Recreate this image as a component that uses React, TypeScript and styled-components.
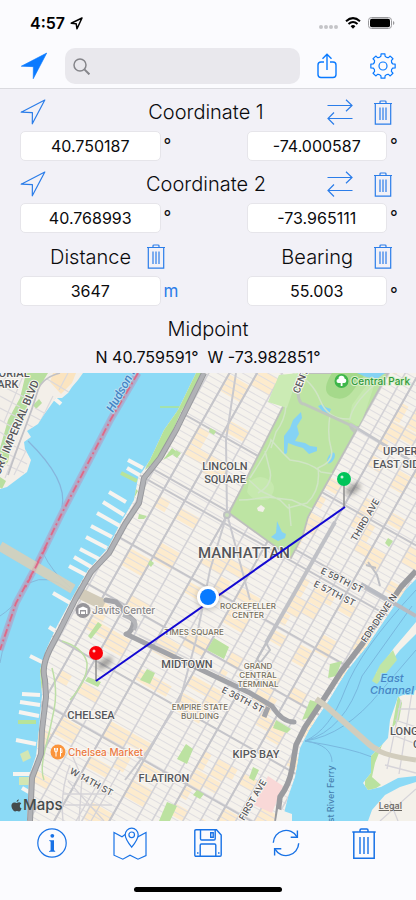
import React from "react";
import styled, { createGlobalStyle } from "styled-components";

const BLUE = "#0a7aff";
const ICON_BLUE = "#2b7de9";
const TOOL_BLUE = "#1872e6";

const GlobalStyle = createGlobalStyle`
  * { box-sizing: border-box; }
  body { margin: 0; background: #fbfbfe; font-family: Inter, "Liberation Sans", sans-serif; color: #0b0b0d; }
  button, input { font: inherit; color: inherit; }
`;

const Page = styled.div`
  display: flex;
  flex-direction: column;
  min-height: 100vh;
  background: #fbfbfe;
`;

const StatusBar = styled.header`
  display: flex;
  align-items: center;
  height: 44px;
  padding: 2px 21px 0 30px;
  gap: 5px;
  font-size: 16px;
  font-weight: 600;
  color: #000;
`;

const StatusIcons = styled.div`
  display: flex;
  align-items: center;
  gap: 7px;
  margin-left: auto;
`;

const NavBar = styled.nav`
  display: flex;
  align-items: center;
  height: 45px;
  padding: 0 20px;
  border-bottom: 1px solid #dadadf;
`;

const IconButton = styled.button<{ $tint?: string; $align?: string }>`
  display: flex;
  align-items: center;
  justify-content: ${(p) => p.$align ?? "center"};
  flex: none;
  padding: 0;
  border: 0;
  background: none;
  color: ${(p) => p.$tint ?? ICON_BLUE};
  cursor: pointer;
`;

const NavActions = styled.div`
  display: flex;
  align-items: center;
  gap: 33px;
  margin-left: 17px;
`;

const SearchField = styled.label`
  display: flex;
  flex: 1;
  align-items: center;
  gap: 8px;
  min-width: 0;
  height: 36px;
  margin-left: 17px;
  padding: 0 8px;
  border-radius: 10px;
  background: #e9e8ed;
`;

const SearchInput = styled.input`
  flex: 1;
  min-width: 0;
  border: 0;
  outline: 0;
  background: none;
  font-size: 17px;
`;

const Panel = styled.main`
  background: #f2f1f7;
`;

const CoordinateHeader = styled.div`
  display: grid;
  grid-template-columns: 1fr auto 1fr;
  align-items: center;
  height: 42px;
  padding: 4px 24px 0 20px;
`;

const HeaderActions = styled.div`
  display: flex;
  align-items: center;
  justify-content: flex-end;
  gap: 21px;
`;

const Title = styled.h2`
  margin: 0;
  font-size: 20px;
  line-height: 28px;
  font-weight: 300;
  text-align: center;
`;

const MeasureHeader = styled.div`
  display: grid;
  grid-template-columns: 1fr 1fr;
  align-items: center;
  height: 43px;
  padding-top: 4px;
`;

const MeasureCell = styled.div<{ $end: number; $gap: number }>`
  display: flex;
  align-items: center;
  justify-content: flex-end;
  gap: ${(p) => p.$gap}px;
  padding-right: ${(p) => p.$end}px;
`;

const MeasureLabel = styled.label`
  font-size: 20px;
  line-height: 28px;
  font-weight: 300;
`;

const FieldRow = styled.div`
  display: grid;
  grid-template-columns: minmax(0, 1fr) 86px minmax(0, 1fr) 14px;
  height: 30px;
  padding: 0 15px 0 20px;
`;

const ValueInput = styled.input`
  width: 100%;
  height: 30px;
  padding: 0 8px;
  border: 1px solid #e6e5ea;
  border-radius: 5px;
  background: #fff;
  font-size: 16px;
  text-align: center;
`;

const Degree = styled.span<{ $low?: boolean }>`
  padding: ${(p) => (p.$low ? 6 : 2)}px 0 0 3px;
  font-size: 17px;
  line-height: 24px;
`;

const UnitButton = styled.button`
  justify-self: start;
  padding: 0 0 0 3px;
  border: 0;
  background: none;
  color: ${ICON_BLUE};
  font-size: 17px;
  line-height: 28px;
`;

const Midpoint = styled.section`
  display: flex;
  flex-direction: column;
  align-items: center;
  height: 67px;
  padding-top: 9px;
`;

const MidpointValue = styled.p`
  margin: 0;
  font-size: 16px;
  line-height: 28px;
  white-space: pre;
`;

const MapArea = styled.section`
  position: relative;
  display: flex;
  flex: 1;
  overflow: hidden;
  background: #8cdaf6;
`;

const MapDrawing = styled.svg`
  display: block;
  width: 100%;
  font-family: Roboto, "Liberation Sans", sans-serif;
`;

const MapBrand = styled.div`
  position: absolute;
  left: 11px;
  bottom: 6px;
  display: flex;
  align-items: center;
  gap: 1px;
  color: #454b4c;
  font-size: 15px;
  line-height: 20px;
  font-weight: 500;
`;

const LegalLink = styled.a`
  position: absolute;
  right: 14px;
  bottom: 8px;
  color: #68655f;
  font-size: 9px;
  line-height: 14px;
  font-weight: 500;
`;

const Toolbar = styled.footer`
  display: flex;
  flex-direction: column;
  align-items: center;
  justify-content: space-between;
  height: 79px;
  padding-bottom: 8px;
`;

const ToolRow = styled.div`
  display: grid;
  grid-template-columns: repeat(5, 1fr);
  width: 100%;
  height: 44px;
  padding: 0 13px;
`;

const HomeIndicator = styled.div`
  width: 148px;
  height: 5px;
  border-radius: 3px;
  background: #000;
`;

const thin = { fill: "none", stroke: "currentColor", strokeWidth: 1.2 };

const LocateIcon = ({ filled }: { filled?: boolean }) => {
  const size = filled ? 28 : 26;
  return (
    <svg width={size} height={size} viewBox="0 0 26 26">
      <path
        d="M24.8 1 1.2 13.2 12.4 13.6 12.3 24.8Z"
        fill={filled ? "currentColor" : "none"}
        stroke="currentColor"
        strokeWidth={filled ? 0.6 : 1.2}
        strokeLinejoin="round"
      />
    </svg>
  );
};

const SwapIcon = () => (
  <svg width="26" height="26" viewBox="0 0 26 26" {...thin}>
    <path d="M.5 6.5H25M19 .8l6 5.7-6 5.7M25.5 19.5H1M7 13.5l-6 6 6 6" />
  </svg>
);

const TrashIcon = ({ large }: { large?: boolean }) => (
  <svg width={large ? 24 : 18} height={large ? 31 : 25} viewBox={large ? "0 0 24 31" : "0 0 18 25"} {...thin}>
    {large ? (
      <>
        <path d="M.3 4H23.7M8 4V2.2Q8 1 9.2 1h5.600Q16 1 16 2.200V4M1.800 4V30.200H22.200V4" strokeWidth="1.500" />
        <path d="M8 9V26M12 9V26M16 9V26" strokeWidth="1.400" />
      </>
    ) : (
      <>
        <path d="M0 3.500H18M6 3.500V1.800Q6 1 7 1h4q1 0 1 .8V3.500M1.300 3.500V24.200H16.700V3.500" />
        <path d="M6 7.500V20M9 7.500V20M12 7.500V20" />
      </>
    )}
  </svg>
);

const ShareIcon = () => (
  <svg width="20" height="26" viewBox="0 0 20 26" {...thin} strokeWidth={1.4}>
    <path d="M7 9H4Q1 9 1 12v9.5q0 3 3 3h12q3 0 3-3V12q0-3-3-3h-3M10 17V1.5M5.5 5.800 10 1.300l4.500 4.500" />
  </svg>
);

const gearPath = (() => {
  const at = (r: number, degrees: number) => {
    const a = (degrees * Math.PI) / 180;
    return `${(13 + r * Math.cos(a)).toFixed(2)} ${(13 + r * Math.sin(a)).toFixed(2)}`;
  };
  let d = "";
  for (let i = 0; i < 8; i++) {
    const c = i * 45 - 90;
    d += `${i ? "L" : "M"}${at(10, c - 12)} L${at(12.3, c - 9)} L${at(12.3, c + 9)} L${at(10, c + 12)} Q${at(8.8, c + 22.5)} ${at(10, c + 33)}`;
  }
  return `${d}Z`;
})();

const GearIcon = () => (
  <svg width="26" height="26" viewBox="0 0 26 26" {...thin} strokeLinejoin="round">
    <path d={gearPath} />
    <circle cx="13" cy="13" r="4" />
  </svg>
);

const SearchIcon = () => (
  <svg width="17" height="17" viewBox="0 0 17 17" fill="none" stroke="#85858a" strokeWidth="1.500">
    <circle cx="7" cy="7" r="6" />
    <path d="m11.400 11.400 5 5" strokeWidth="2" />
  </svg>
);

const InfoIcon = () => (
  <svg width="30" height="30" viewBox="0 0 30 30" {...thin}>
    <circle cx="15" cy="15" r="14.200" />
    <g fill="currentColor" stroke="none">
      <circle cx="15.300" cy="7.800" r="1.900" />
      <path d="M12.200 12.200h4.800v9.900q0 .7 1.200.8v.8h-6.200v-.8q1.600 0 1.600-.9v-8.100q0-.8-1.400-.8Z" />
    </g>
  </svg>
);

const MapPinIcon = () => (
  <svg width="34" height="33" viewBox="0 0 34 33" {...thin}>
    <path d="M12.500 7.300 9 9.800 1 5.500v22.700l8.800 4 7.200-4 8 4 8-3.700V5.500L25 9.800l-2.800-1.600" />
    <path d="M18.700 20.200q-6.500-8.200-6.500-12.500a6.500 6.500 0 0 1 13 0q0 4.300-6.500 12.500Z" fill="#fbfbfe" />
    <circle cx="18.700" cy="7.800" r="2.800" />
  </svg>
);

const SaveIcon = () => (
  <svg width="28" height="28" viewBox="0 0 28 28" {...thin} strokeWidth={1.4}>
    <path d="M2 .8H22.500L27.200 6V26q0 1.200-1.200 1.200H2Q.8 27.200.8 26V2Q.8.8 2 .8Z" />
    <path d="M6.500.8V9.800q0 1.200 1.200 1.200H20q1.200 0 1.200-1.200V.8M16.700 3.800h2.500v4.500h-2.500zM6.200 27V16.200q0-1.200 1.200-1.200h13.200q1.200 0 1.200 1.200V27M3 24h1.500M24 24h1.500" />
  </svg>
);

const RefreshIcon = () => (
  <svg width="28" height="28" viewBox="0 0 28 28" {...thin} strokeWidth={1.4}>
    <path d="M1.300 13.700A12.700 12.700 0 0 1 25 7.800M26.700 14.300A12.700 12.700 0 0 1 3 20.200" />
    <path d="M25.400 1.500V8.200H18.700M2.600 26.500V19.800H9.300" />
  </svg>
);

const StatusArrow = () => (
  <svg width="13" height="13" viewBox="0 0 13 13" fill="none" stroke="#000" strokeWidth="1.500" strokeLinejoin="round">
    <path d="M12 1 1.200 6.200 6.200 6.800 7 11.800Z" />
  </svg>
);

const SignalDots = () => (
  <svg width="19" height="12" viewBox="0 0 19 12" fill="#c4c4c8">
    <circle cx="2" cy="10" r="2" />
    <circle cx="7" cy="10" r="2" />
    <circle cx="12" cy="10" r="2" />
    <circle cx="17" cy="10" r="2" />
  </svg>
);

const WifiIcon = () => (
  <svg width="16" height="12" viewBox="0 0 16 12" fill="none" stroke="#000" strokeWidth="2">
    <path d="M1 4.300Q8-2 15 4.300M3.500 7Q8 3 12.500 7" />
    <path d="M5.600 9.200Q8 7 10.400 9.200L8 11.700Z" fill="#000" stroke="none" />
  </svg>
);

const BatteryIcon = () => (
  <svg width="27" height="12" viewBox="0 0 27 12">
    <rect x=".5" y=".5" width="23" height="11" rx="3" fill="none" stroke="#99999c" />
    <rect x="2" y="1.700" width="20" height="8.600" rx="1.800" />
    <path d="M25 4q1.400.6 1.400 2T25 8Z" fill="#99999c" />
  </svg>
);

/* Street grid: u runs along the streets, v along the avenues, both measured from Columbus Circle. */
const GRID = "translate(229 512) rotate(29.5)";
const avenues = [-122, -104, -86, -68, -44, -22, 0, 24, 48, 71, 85, 97, 112, 127, 142, 158, 174, 192, 212];
const wideAvenues = [-68, -44, 0, 48, 97, 142];
const wideStreets = [-63, 0, 12, 76, 132, 195, 258];
const streets = Array.from({ length: 108 }, (_, i) => -264 + i * 6.2);

const zones = avenues.slice(3, -1).flatMap((u, column) =>
  Array.from({ length: 30 }, (_, row) => {
    const v = -260 + row * 20;
    const seed = (column * 37 + row * 53 + column * row * 11) % 10;
    return { u, v, w: avenues[column + 4] - u, seed };
  }).filter((z) => z.seed < 4)
);

const manhattan =
  "M196 373 178 410 164 430 150 460 138 478 134 500 120 524 108 548 88 570 71 600 56 628 46 650 40 670 42 695 39 730 36 756 29 776 27 821H282L288 797 295 777 300 748 309 730 329 700 346 672 367 646 405 590 416 579V373Z";
const westSide =
  "M204 373 176 430 160 458 144 478 139 503 125 524 109 553 91 572 75 600 60 630 50 649Q41 667 45 680L46 697 42 730 41 754 32 778 30 821";
const eastSide = "M416 571 401 587 363 643 341 672 325 697 305 727 296 745 292 769Q289 785 280 797L277 821";
const park = "M229 513 300 373H388L308 517 303 535 291 558Z";
const ferryway = "M138 373 111 419 61 515 35 568 16 603 0 650";

const piers = [
  "M128 460 143 468", "M127 468 141 476", "M109 492 126 502", "M103 502 124 515", "M97 513 120 526",
  "M91 526 112 537", "M86 537 107 548", "M80 549 101 560", "M74 557 93 568", "M69 566 86 575",
  "M53 593 72 604", "M49 627 57 632", "M30 656 44 663", "M22 694 40 695", "M20 702 40 705",
  "M19 712 39 716", "M16 740 36 744", "M13 774 30 774", "M22 788 29 792", "M55 399 61 404",
];

interface MapLabelProps {
  x: number;
  y: number;
  size: number;
  lines: string[];
  color?: string;
  weight?: number;
  angle?: number;
  anchor?: "start" | "middle";
  leading?: number;
  italic?: boolean;
  halo?: string;
}

const MapLabel = ({
  x, y, size, lines, color = "#55565a", weight = 500, angle = 0, anchor = "middle", leading = 13, italic, halo = "#faf8f4",
}: MapLabelProps) => (
  <text
    transform={`translate(${x} ${y}) rotate(${angle})`}
    fontSize={size}
    fontWeight={weight}
    fontStyle={italic ? "italic" : "normal"}
    fill={color}
    textAnchor={anchor}
    stroke={halo}
    strokeWidth="2"
    strokeLinejoin="round"
    paintOrder="stroke"
  >
    {lines.map((line, i) => (
      <tspan key={line} x="0" y={i * leading}>{line}</tspan>
    ))}
  </text>
);

const Pin = ({ x, y, color }: { x: number; y: number; color: string }) => (
  <g>
    <ellipse cx={x + 9} cy={y - 18} rx="9" ry="4" transform={`rotate(-35 ${x + 9} ${y - 18})`} fill="#555" opacity=".55" filter="url(#soft)" />
    <path d={`M${x} ${y}V${y - 22}`} stroke="#8c8c8c" strokeWidth="1.500" />
    <circle cx={x} cy={y - 28} r="7" fill={color} />
    <circle cx={x - 2} cy={y - 30} r="1.500" fill="#fff" opacity=".8" />
  </g>
);

const CityMap = () => (
  <MapDrawing viewBox="0 373 416 448" preserveAspectRatio="xMidYMid slice" role="img" aria-label="Map of Manhattan">
    <defs>
      <clipPath id="island"><path d={manhattan} /></clipPath>
      <clipPath id="parkClip"><path d={park} /></clipPath>
      <clipPath id="jersey"><path d="M0 373H83L78 380 72 387 68 393 62 398 56 398 43 416 38 424 27 431 31 437 24 442 25 449 31 460 27 472 7 487 0 489Z" /></clipPath>
      <clipPath id="queens"><path d="M416 690 398 697 390 720 388 738 380 747 371 756 371 773 363 783 368 790 381 787 398 778 416 776ZM416 782 400 787 385 795 372 810 368 821H416Z" /></clipPath>
      <filter id="soft" x="-50%" y="-100%" width="200%" height="300%"><feGaussianBlur stdDeviation="2.500" /></filter>
    </defs>
    <rect y="373" width="416" height="448" fill="#8cdaf6" />

    <g clipPath="url(#jersey)">
      <rect y="373" width="90" height="120" fill="#f3efe9" />
      <path d="M26 373H48L40 386 30 394 25 416 13 435 8 462 0 470V448L8 420 20 398Z" fill="#b9dfa0" />
      <path d="M53 373H76L72 383 61 394 50 382Z" fill="#fbe4c0" />
      <path d="M33 405l6-6 3 4-6 6ZM0 477l6 4-4 8-4-3Z" fill="#b9dfa0" />
      <g fill="none" stroke="#dbd9dc" strokeWidth="1.200">
        <path d="M0 385 24 397M0 396 20 407M0 408 17 417M0 420 12 427M0 432 9 438M8 373 0 388M23 376 4 422M31 415 42 421M35 408 46 414M27 424 36 429M10 455 27 464M14 446 27 452M7 465 24 473M47 379 72 394M68 373 59 390M53 396 14 475M22 436 5 478" />
      </g>
      <path d="M60 373Q42 378 38 390 32 410 25 428T8 475" fill="none" stroke="#c1c1c6" strokeWidth="1.800" />
    </g>

    <g fill="none">
      <path d="M28 441Q68 480 62 507" stroke="#86b5dc" strokeWidth="1.200" />
      <path d="M43 553Q52 572 70 587M29 583Q48 573 69 590M0 616Q12 608 17 600M0 663Q5 635 13 612" stroke="#85b9dc" />
      <path d={ferryway} stroke="#aaa9cf" strokeWidth="7" opacity=".75" />
      <path d={ferryway} stroke="#e1577c" strokeWidth="1.800" strokeDasharray="8 3 2 3" />
      <path d="M0 546 73 589" stroke="#d6cfba" strokeWidth="10" opacity=".9" />
      <path d="M46 547 25 588" stroke="#e1577c" strokeWidth="1.800" strokeDasharray="8 3 2 3" />
      <path d={ferryway} stroke="#d88da0" strokeWidth="4" opacity=".35" />
    </g>

    <g fill="none" stroke="#f6f4f0" strokeWidth="4">
      {piers.map((d) => <path key={d} d={d} />)}
    </g>
    <path d="M121 473 137 481M18 722H36" stroke="#b7e39a" strokeWidth="4" />
    <path d="M160 407H180" stroke="#a3e2ad" strokeWidth="2" />
    <path d="M20 754l8-4 3 8-8 4ZM19 777h10v8H19Z" fill="#d3e6b3" />

    <path d={manhattan} fill="#f5f2ec" />
    <g clipPath="url(#island)">
      <g transform={GRID}>
        {zones.map((z) => (
          <rect key={`${z.u}:${z.v}`} x={z.u} y={z.v} width={z.w / (z.seed % 2 ? 1 : 2)} height={z.seed < 2 ? 19 : 12} fill="#fdebcd" />
        ))}
        <g stroke="#dfdde0" strokeWidth="1">
          {streets.map((v) => <path key={v} d={`M-150 ${v}H290`} />)}
        </g>
        <g stroke="#d3d2d6" strokeWidth="1.600">
          {avenues.map((u) => <path key={u} d={`M${u} -300V430`} />)}
        </g>
        <g stroke="#c5c5ca" strokeWidth="2">
          {wideStreets.map((v) => <path key={v} d={`M-150 ${v}H290`} />)}
          {wideAvenues.map((u) => <path key={u} d={`M${u} -300V430`} />)}
        </g>
      </g>
      <path d="M236 373 226 440 227 514 250 600M227 514 210 570 196 640 180 700 148 750 125 780" fill="none" stroke="#c9c9ce" strokeWidth="2" />
      <path d="M196 373H204L181 412 162 455 145 470 158 438 166 420ZM134 487l4 4-5 9-3-3ZM177 452 172 448 163 460Z" fill="#b6e199" />
      <path d="M41 660 47 665 41 692 31 695 37 680Z" fill="#b6e199" />
      <g fill="#bce2a1">
        <path d="M98 622 102 625 91 639 88 636ZM88 677 101 682 98 687 85 681ZM147 669 155 673 150 684 140 680ZM214 638 229 647 224 659 207 650ZM186 744 193 749 187 764 177 759ZM197 790 204 794 200 799 193 795ZM167 802 177 806 170 821H159ZM276 720 291 729 287 733 273 728ZM310 700 320 703 308 718 302 720ZM253 767l6 3-5 11-5-3ZM139 514l8 2-3 3h-6ZM176 450l5 3-4 5-4-3ZM210 428l6 3-2 4-5-3ZM388 538l5 3-4 6-4-4ZM150 560l4 3-3 4-3-3ZM330 664l12-3-6 15-8 2Z" />
      </g>
      <path d="M268 776 283 786 272 813 254 805Z" fill="#f9d8d7" />
      <path d="M52 668Q58 690 54 710T45 750 44 780M62 641Q84 648 87 663 88 680 70 700" fill="none" stroke="#bddfa6" strokeWidth="1.500" />
      <path d="M63 821Q60 790 70 765M79 821 82 778 72 755M63 794H112M65 805H112M68 781 104 821M100 780 76 821M120 770 91 821" fill="none" stroke="#d5d3d7" strokeWidth="1.400" />
    </g>

    <path d={park} fill="#bde4a3" stroke="#bdbfbd" strokeWidth="1.800" />
    <path d="M268 402 279 375 299 373 287 408Z" fill="#cbebb4" />
    <g clipPath="url(#parkClip)">
      <path d="M332 373H366L352 392Q343 403 330 396 321 390 332 373Z" fill="#a5d98b" />
      <path d="M352 405 366 386 375 383 360 427 349 421ZM249 482q10-9 20-2t0 19q-15 4-22-7Z" fill="#c6e9ae" />
      <g fill="#85d3f4">
        <path d="M301 412 302 418 297 426 299 434 295 441 305 443 310 446 317 447 317 451 309 454 303 448 296 446 288 443 287 453 284 455 284 436 290 428 293 420Z" />
        <path d="M318 406 323 404 325 407 331 409 329 414 323 412Z" />
        <ellipse cx="331" cy="458" rx="3" ry="6" transform="rotate(30 331 458)" />
        <path d="M357 373H385L377 379 366 377Z" />
        <path d="M277 521 282 532 286 534 285 538 278 541 271 537 276 533Z" />
      </g>
      <g fill="none" stroke="#d0e5c5" strokeWidth="1.500">
        <path d="M294 373Q312 380 320 400T350 419Q352 405 374 385" />
        <path d="M330 415Q327 435 331 448T318 468Q321 490 307 503L288 508 280 500 261 491 249 480M250 478Q270 447 271 440L282 452 290 460Q310 462 321 472L334 474M286 406Q285 420 276 432L271 448M239 500Q250 500 267 497L292 500 312 509M289 504 291 526M258 493Q275 484 269 467L265 451" />
      </g>
      <path d="M298 390Q298 404 304 404L350 425Q353 434 370 440" fill="none" stroke="#bfc8bd" strokeWidth="3" />
      <path d="M257 508l4-3 4 3-2 4-5-1Z" fill="#f2f0e8" />
    </g>
    <path d="M350 424 416 464" stroke="#c5c6cb" strokeWidth="3" />
    <circle cx="227" cy="515" r="3" fill="#c9dfbc" stroke="#bfc0c4" strokeWidth="2" />

    <g clipPath="url(#island)" fill="none">
      <path d="M73 590 104 605" stroke="#d2cbb9" strokeWidth="11" />
      <path d="M106 600 116 602 128 615 134 621Q132 632 127 634" stroke="#a3a4a9" strokeWidth="5" strokeLinecap="round" />
      <path d="M123 615 132 619Q138 624 134 630" stroke="#b5b6ba" strokeWidth="4" />
      <path d="M126 634 250 693 272 706Q282 722 294 722" stroke="#a2a3a8" strokeWidth="5" strokeLinecap="round" />
      <path d="M139 635 250 689" stroke="#d8d7d9" strokeWidth="1.500" />
      <path d="M264 717 268 707" stroke="#a2a3a8" strokeWidth="5" />
      <path d="M266 643 257 659M266 643 270 650 260 663 257 659M368 562 377 575 380 586M366 565 376 568" stroke="#bfc0c5" strokeWidth="2" />
      <path d="M335 522 266 643" stroke="#c0c1c6" strokeWidth="4" />
    </g>

    <path d={westSide} fill="none" stroke="#98999d" strokeWidth="6" strokeLinejoin="round" />
    <path d={westSide} fill="none" stroke="#b1b2b6" strokeWidth="4" strokeLinejoin="round" />
    <path d={eastSide} fill="none" stroke="#9a9b9f" strokeWidth="5.500" strokeLinejoin="round" />

    <g fill="none">
      <path d="M416 590Q360 650 345 690T305 741Q345 735 380 692L416 650M305 741Q332 745 332 762M305 741Q350 748 372 757M305 741Q345 730 362 676L412 606" stroke="#79b8df" />
      <path d="M316 699 326 706 370 745Q380 754 416 760" stroke="#d2cdbd" strokeWidth="6" />
    </g>
    <path d="M278 809 292 814V821H276Z" fill="#f3f1ec" />
    <path d="M416 622 394 648 376 673 381 674 400 650 416 634Z" fill="#f4f2eb" />
    <path d="M393 650 380 665 372 681 377 684 397 660Z" fill="#bfe5a6" />
    <g clipPath="url(#queens)">
      <rect x="360" y="665" width="56" height="156" fill="#f4f1ea" />
      <path d="M398 695 392 728 399 720 402 703ZM384 740 380 747 365 755V795L381 785 372 777 375 763Z" fill="#b9e29f" />
      <path d="M395 720 416 727M390 734 416 744M385 765 416 773M401 700 387 769M412 692 399 774M398 709H416M380 821 416 789M398 821 390 801" fill="none" stroke="#d6d4d9" strokeWidth="1.300" />
      <path d="M374 748Q385 756 416 760" fill="none" stroke="#d2cdbd" strokeWidth="5" />
    </g>
    <path d="M361 584 416 616" stroke="#b8bbc2" strokeWidth="4" />

    <MapLabel x={-11} y={377} size={11} lines={["MORIAL"]} anchor="start" />
    <MapLabel x={-9} y={388} size={11} lines={["PARK"]} anchor="start" />
    <MapLabel x={-3} y={482} size={11} lines={["PORT IMPERIAL BLVD"]} angle={-67} anchor="start" />
    <MapLabel x={113} y={413} size={12} lines={["Hudson River"]} angle={-61} anchor="start" color="#4685c4" halo="#b9e0f5" italic />
    <MapLabel x={225} y={470} size={11} lines={["LINCOLN", "SQUARE"]} />
    <MapLabel x={299} y={394} size={10} lines={["CENTRAL PARK W"]} angle={-68} anchor="start" />
    <MapLabel x={383} y={455} size={11} lines={["UPPER"]} anchor="start" />
    <MapLabel x={373} y={468} size={11} lines={["EAST SIDE"]} anchor="start" />
    <MapLabel x={244} y={558} size={15} lines={["MANHATTAN"]} />
    <MapLabel x={187} y={668} size={11} lines={["MIDTOWN"]} />
    <MapLabel x={91} y={719} size={11} lines={["CHELSEA"]} />
    <MapLabel x={256} y={758} size={11} lines={["KIPS BAY"]} />
    <MapLabel x={164} y={782} size={11} lines={["FLATIRON"]} />
    <MapLabel x={390} y={735} size={11} lines={["LONG ISLAND"]} anchor="start" />
    <MapLabel x={413} y={748} size={11} lines={["CITY"]} anchor="start" />
    <g fontFamily="Inter, sans-serif">
      <MapLabel x={248} y={609} size={8} lines={["ROCKEFELLER", "CENTER"]} leading={9} color="#77705e" />
      <MapLabel x={194} y={635} size={8} lines={["TIMES SQUARE"]} color="#77705e" />
      <MapLabel x={258} y={669} size={8} lines={["GRAND", "CENTRAL", "TERMINAL"]} leading={9} color="#77705e" />
      <MapLabel x={200} y={710} size={8} lines={["EMPIRE STATE", "BUILDING"]} leading={9} color="#77705e" />
      <MapLabel x={320} y={573} size={9} lines={["E 59TH ST"]} angle={26} anchor="start" />
      <MapLabel x={313} y={586} size={9} lines={["E 57TH ST"]} angle={27} anchor="start" />
      <MapLabel x={221} y={692} size={9} lines={["E 36TH ST"]} angle={27} anchor="start" />
      <MapLabel x={69} y={773} size={9} lines={["W 14TH ST"]} angle={29} anchor="start" />
      <MapLabel x={356} y={542} size={9} lines={["THIRD AVE"]} angle={-60} anchor="start" />
      <MapLabel x={366} y={643} size={9} lines={["FDR DRIVE N"]} angle={-56} anchor="start" />
      <MapLabel x={244} y={821} size={9} lines={["FIRST AVE"]} angle={-60} anchor="start" />
      <MapLabel x={334} y={833} size={9} lines={["East River Ferry"]} angle={-90} anchor="start" color="#477fae" halo="#8cdaf6" />
      <MapLabel x={392} y={682} size={11} lines={["East", "Channel"]} leading={12} color="#4685c4" halo="#8cdaf6" italic />
    </g>

    <circle cx="341.500" cy="381" r="7" fill="#3eb64a" />
    <path d="M340.700 386V383H338.500A2 2 0 0 1 338.500 379 3 3 0 0 1 344.500 378.500 2.300 2.300 0 0 1 344.500 383H342.500V386Z" fill="#fff" />
    <g fontFamily="Inter, sans-serif">
      <MapLabel x={351} y={385} size={10} lines={["Central Park"]} anchor="start" color="#319a3c" halo="#dcf0ce" />
      <MapLabel x={92} y={614} size={10} lines={["Javits Center"]} anchor="start" color="#87868a" />
      <MapLabel x={68} y={756} size={10} lines={["Chelsea Market"]} anchor="start" color="#ec7a43" />
    </g>
    <circle cx="83" cy="610.500" r="7.500" fill="#96959a" />
    <path d="M78.500 614V608.500L83 606.500 87.500 608.500V614H86V610H80V614ZM81 611.500H85V614H81Z" fill="#fff" />
    <circle cx="58" cy="752" r="7.500" fill="#fb943b" />
    <path d="M54.500 748V750.500Q54.500 752 56 752V756.500M56 748V752M57.500 748V750.500Q57.500 752 56 752M60.500 756.500V748Q62.500 749 62 752.500H60.500" fill="none" stroke="#fff" strokeWidth="1" />

    <Pin x={344} y={507} color="#00c45a" />
    <Pin x={96} y={681} color="#fb0009" />
    <path d="M96 681 345 507" stroke="#1208d2" strokeWidth="2" />
    <circle cx="208" cy="598" r="12" fill="#666" opacity=".3" filter="url(#soft)" />
    <circle cx="208" cy="597" r="11" fill="#fff" />
    <circle cx="208" cy="597" r="8" fill="#087aff" />
  </MapDrawing>
);

const CoordinateBlock = ({ index, latitude, longitude }: { index: number; latitude: string; longitude: string }) => (
  <section aria-labelledby={`coordinate-${index}`}>
    <CoordinateHeader>
      <IconButton $align="flex-start" aria-label="Use current location"><LocateIcon /></IconButton>
      <Title id={`coordinate-${index}`}>Coordinate {index}</Title>
      <HeaderActions>
        <IconButton aria-label="Swap coordinates"><SwapIcon /></IconButton>
        <IconButton aria-label="Clear coordinate"><TrashIcon /></IconButton>
      </HeaderActions>
    </CoordinateHeader>
    <FieldRow>
      <ValueInput aria-label={`Latitude ${index}`} defaultValue={latitude} />
      <Degree>°</Degree>
      <ValueInput aria-label={`Longitude ${index}`} defaultValue={longitude} />
      <Degree>°</Degree>
    </FieldRow>
  </section>
);

export default function App() {
  return (
    <Page>
      <GlobalStyle />
      <StatusBar>
        <span>4:57</span>
        <StatusArrow />
        <StatusIcons>
          <SignalDots />
          <WifiIcon />
          <BatteryIcon />
        </StatusIcons>
      </StatusBar>
      <NavBar>
        <IconButton $tint={BLUE} aria-label="Show my location"><LocateIcon filled /></IconButton>
        <SearchField>
          <SearchIcon />
          <SearchInput type="text" aria-label="Search" />
        </SearchField>
        <NavActions>
          <IconButton $tint={BLUE} aria-label="Share"><ShareIcon /></IconButton>
          <IconButton $tint={BLUE} aria-label="Settings"><GearIcon /></IconButton>
        </NavActions>
      </NavBar>
      <Panel>
        <CoordinateBlock index={1} latitude="40.750187" longitude="-74.000587" />
        <CoordinateBlock index={2} latitude="40.768993" longitude="-73.965111" />
        <MeasureHeader>
          <MeasureCell $end={43} $gap={16}>
            <MeasureLabel htmlFor="distance">Distance</MeasureLabel>
            <IconButton aria-label="Clear distance"><TrashIcon /></IconButton>
          </MeasureCell>
          <MeasureCell $end={24} $gap={21}>
            <MeasureLabel htmlFor="bearing">Bearing</MeasureLabel>
            <IconButton aria-label="Clear bearing"><TrashIcon /></IconButton>
          </MeasureCell>
        </MeasureHeader>
        <FieldRow>
          <ValueInput id="distance" defaultValue="3647" />
          <UnitButton aria-label="Distance unit: m">m</UnitButton>
          <ValueInput id="bearing" defaultValue="55.003" />
          <Degree $low>°</Degree>
        </FieldRow>
        <Midpoint>
          <Title>Midpoint</Title>
          <MidpointValue>{"N 40.759591°  W -73.982851°"}</MidpointValue>
        </Midpoint>
      </Panel>
      <MapArea>
        <CityMap />
        <MapBrand>
          <svg width="11" height="13" viewBox="0 0 11 13" fill="currentColor">
            <path d="M7.800.3Q7.900 2.700 5.500 3.100 5.400 1 7.800.3ZM5.500 3.900Q6.300 3.900 7 3.500 9 2.900 10.300 4.500 8.700 5.500 8.800 7.200 9 9 10.600 9.600 9.500 12.700 7.900 12.500 6.600 11.900 5.600 12.100 4.700 12.600 3.900 12.500 2.600 12.400 1.300 10Q-.3 6.800 1 4.800 2.200 3.100 4.200 3.600Z" />
          </svg>
          Maps
        </MapBrand>
        <LegalLink href="#legal">Legal</LegalLink>
      </MapArea>
      <Toolbar>
        <ToolRow>
          <IconButton $tint={TOOL_BLUE} aria-label="Information"><InfoIcon /></IconButton>
          <IconButton $tint={TOOL_BLUE} aria-label="Map options"><MapPinIcon /></IconButton>
          <IconButton $tint={TOOL_BLUE} aria-label="Save"><SaveIcon /></IconButton>
          <IconButton $tint={TOOL_BLUE} aria-label="Refresh"><RefreshIcon /></IconButton>
          <IconButton $tint={TOOL_BLUE} aria-label="Clear all"><TrashIcon large /></IconButton>
        </ToolRow>
        <HomeIndicator />
      </Toolbar>
    </Page>
  );
}
